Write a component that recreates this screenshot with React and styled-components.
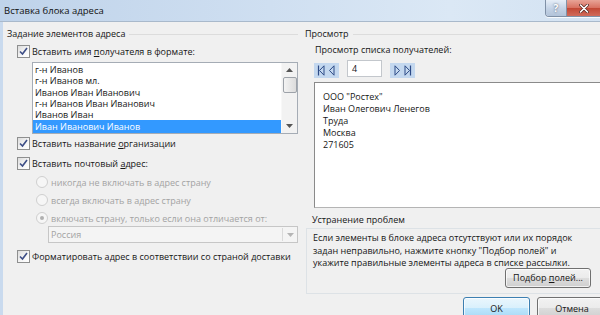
import * as React from "react";
import styled, { createGlobalStyle } from "styled-components";

const GlobalStyle = createGlobalStyle`
  html, body { margin: 0; padding: 0; background: #f0f0f0; overflow: hidden; }
  body { font-family: "Open Sans", "Noto Sans", sans-serif; font-size: 9px; color: #161616; }
`;

const Window = styled.div`
  width: 600px;
  height: 315px;
  overflow: hidden;
  display: flex;
  flex-direction: column;
  background: #f0f0f0;
`;

const TitleBar = styled.div`
  height: 21px;
  flex: none;
  display: flex;
  align-items: flex-start;
  background: linear-gradient(90deg, #bfd3ea 0%, #cfdff1 45%, #dbe8f5 75%, #d3e2f2 100%);
  border-bottom: 1px solid #a9b9cb;
`;

const Title = styled.div`
  flex: 1;
  padding: 4px 0 0 4px;
  font-size: 9.5px;
  color: #111;
`;

const CaptionGroup = styled.div`
  flex: none;
  display: flex;
  height: 16px;
  border: 1px solid #7f90a6;
  border-top: none;
  border-right: none;
  border-radius: 0 0 0 4px;
  overflow: hidden;
  box-shadow: 0 1px 0 rgba(255, 255, 255, 0.8);
`;

const HelpButton = styled.div`
  width: 20px;
  background-color: #c6d4e6;
  background-image: linear-gradient(#e6eef7, #c3d2e5 55%, #b2c3d9);
  display: flex;
  align-items: center;
  justify-content: center;
  font-weight: bold;
  font-size: 10px;
  color: #fff;
  text-shadow: 0 0 2px #3f4a5e;
  border-right: 1px solid #8193a8;
`;

const CloseButton = styled.div`
  width: 33px;
  background-color: #cf5d4e;
  background-image: linear-gradient(#e8a497, #d87262 48%, #c24835 52%, #d06b5b);
  display: flex;
  align-items: center;
  justify-content: center;
`;

const Body = styled.div`
  flex: 1;
  display: flex;
  border-left: 3px solid #c9daee;
`;

const LeftPane = styled.div`
  width: 291px;
  flex: none;
  padding: 4px 4px 0 4px;
  display: flex;
  flex-direction: column;
`;

const RightPane = styled.div`
  flex: 1;
  padding: 4px 0 0 3px;
  display: flex;
  flex-direction: column;
  min-width: 0;
`;

const GroupHeader = styled.div`
  height: 14px;
  display: flex;
  align-items: center;
  gap: 4px;
  white-space: nowrap;
  &::after {
    content: "";
    flex: 1;
    height: 1px;
    background: #dcdcdc;
    margin-top: 2px;
  }
`;

const Row = styled.div`
  height: 14px;
  display: flex;
  align-items: center;
  gap: ${(p) => p.$gap ?? 2}px;
  margin-top: ${(p) => p.$mt ?? 0}px;
  margin-left: ${(p) => p.$ml ?? 0}px;
  color: ${(p) => (p.$disabled ? "#a3a3a3" : "inherit")};
  white-space: nowrap;
`;

const Box = styled.span`
  width: 11px;
  height: 11px;
  flex: none;
  border: 1px solid #8e8f8f;
  background: linear-gradient(135deg, #dcdcdc 0%, #f7f7f7 60%, #fff 100%);
  display: flex;
  align-items: center;
  justify-content: center;
`;

const Radio = styled.span`
  width: 10px;
  height: 10px;
  flex: none;
  border-radius: 50%;
  border: 1px solid #cfcfcf;
  background: #f6f6f6;
  display: flex;
  align-items: center;
  justify-content: center;
  &::after {
    content: "";
    width: 4px;
    height: 4px;
    border-radius: 50%;
    background: ${(p) => (p.$on ? "#b0b0b0" : "transparent")};
  }
`;

const ListBox = styled.div`
  margin: 4px 0 0 25px;
  height: 70px;
  border: 1px solid #a5acb5;
  background: #fff;
  display: flex;
`;

const ListItems = styled.div`
  flex: 1;
  padding-top: 1px;
  overflow: hidden;
`;

const ListItem = styled.div`
  height: 11.3px;
  line-height: 11px;
  padding-left: 2px;
  white-space: nowrap;
  background: ${(p) => (p.$sel ? "#3399ff" : "transparent")};
  color: ${(p) => (p.$sel ? "#fff" : "inherit")};
  ${(p) => p.$sel && "height: 13px; line-height: 13px;"}
`;

const ScrollBar = styled.div`
  width: 15px;
  flex: none;
  background: #f2f2f2;
  border-left: 1px solid #f8f8f8;
  display: flex;
  flex-direction: column;
  align-items: center;
`;

const ScrollArrow = styled.div`
  height: 14px;
  display: flex;
  align-items: center;
  justify-content: center;
`;

const Thumb = styled.div`
  width: 12px;
  height: 14px;
  border: 1px solid #9da2a9;
  border-radius: 2px;
  background: linear-gradient(90deg, #f3f3f3, #dcdcdc);
`;

const Spacer = styled.div`
  flex: 1;
`;

const Combo = styled.div`
  margin: 1px 0 0 41px;
  height: 15px;
  border: 1px solid #c6c6c6;
  background: #f4f4f4;
  color: #a3a3a3;
  display: flex;
  align-items: center;
  padding-left: 2px;
  justify-content: space-between;
`;

const ComboArrow = styled.div`
  width: 14px;
  height: 13px;
  border-left: 1px solid #dadada;
  display: flex;
  align-items: center;
  justify-content: center;
`;

const Label = styled.div`
  margin: ${(p) => p.$mt ?? 0}px 0 0 ${(p) => p.$ml ?? 0}px;
  height: 14px;
  line-height: 14px;
  white-space: nowrap;
`;

const NavRow = styled.div`
  margin: 3px 0 0 9px;
  height: 18px;
  display: flex;
  align-items: flex-start;
  gap: 8px;
`;

const NavButton = styled.div`
  margin-top: 3px;
  width: 25px;
  height: 15px;
  background: #c4d8ef;
  display: flex;
  align-items: center;
  justify-content: center;
`;

const NumInput = styled.div`
  width: 35px;
  height: 17px;
  border: 1px solid #c3c7cc;
  background: #fff;
  padding-left: 4px;
  line-height: 15px;
  box-sizing: border-box;
`;

const Preview = styled.div`
  margin: 4px 0 0 9px;
  width: 320px;
  height: 126px;
  border: 1px solid #8a8a8a;
  border-right: none;
  border-bottom-color: #b4b4b4;
  background: #fff;
  padding: 8px 0 0 8px;
  box-sizing: border-box;
`;

const PreviewLine = styled.div`
  height: 12px;
  line-height: 12px;
`;

const Trouble = styled.div`
  margin: 1px 0 0 1px;
  width: 320px;
  height: 66px;
  border: 1px solid #dde2e6;
  border-right: none;
  box-sizing: border-box;
  padding: 3px 0 0 6px;
  display: flex;
  flex-direction: column;
`;

const TroubleText = styled.div`
  line-height: 12.5px;
  white-space: nowrap;
`;

const Button = styled.div`
  height: ${(p) => p.$h ?? 20}px;
  width: ${(p) => p.$w}px;
  flex: none;
  box-sizing: border-box;
  border: 1px solid ${(p) => (p.$def ? "#3c7fb1" : "#707070")};
  border-radius: 3px;
  background: ${(p) =>
    p.$def
      ? "linear-gradient(180deg, #eaf6fd 0%, #d9f0fc 50%, #bee6fd 51%, #a7d9f5 100%)"
      : "linear-gradient(180deg, #f2f2f2 0%, #ebebeb 50%, #dddddd 51%, #cfcfcf 100%)"};
  box-shadow: inset 0 0 0 1px rgba(255, 255, 255, 0.7);
  display: flex;
  align-items: center;
  justify-content: center;
  white-space: nowrap;
`;

const TroubleButtonRow = styled.div`
  display: flex;
  padding-left: 192px;
  margin-top: -2px;
`;

const FooterRow = styled.div`
  display: flex;
  gap: 7px;
  margin: 3px 0 0 158px;
`;

const U = styled.span`
  text-decoration: underline;
  text-underline-offset: 1px;
`;

const Check = () => (
  <Box>
    <svg width="9" height="9" viewBox="0 0 9 9">
      <path d="M1 4.5 L3.5 7 L8 1" fill="none" stroke="#3d4e86" strokeWidth="1.6" />
    </svg>
  </Box>
);

const Arrow = ({ up, color = "#555" }) => (
  <svg width="7" height="4" viewBox="0 0 7 4">
    <path d={up ? "M0 4 L3.5 0 L7 4 Z" : "M0 0 L3.5 4 L7 0 Z"} fill={color} />
  </svg>
);

const CloseIcon = () => (
  <svg width="10" height="9" viewBox="0 0 10 9">
    <path d="M1.5 1 L8.5 8 M8.5 1 L1.5 8" stroke="#5a2a24" strokeWidth="3" strokeLinecap="round" />
    <path d="M1.5 1 L8.5 8 M8.5 1 L1.5 8" stroke="#fff" strokeWidth="1.6" strokeLinecap="round" />
  </svg>
);

const FirstIcon = () => (
  <svg width="19" height="11" viewBox="0 0 19 11">
    <path d="M1.5 0.5 V10.5" stroke="#2c4a86" strokeWidth="1.2" />
    <path d="M7 0.8 L2.5 5.5 L7 10.2 Z" fill="none" stroke="#2c4a86" strokeWidth="1" />
    <path d="M17 0.8 L12.5 5.5 L17 10.2 Z" fill="none" stroke="#2c4a86" strokeWidth="1" />
  </svg>
);

const LastIcon = () => (
  <svg width="19" height="11" viewBox="0 0 19 11">
    <path d="M2 0.8 L6.5 5.5 L2 10.2 Z" fill="none" stroke="#2c4a86" strokeWidth="1" />
    <path d="M12 0.8 L16.5 5.5 L12 10.2 Z" fill="none" stroke="#2c4a86" strokeWidth="1" />
    <path d="M17.5 0.5 V10.5" stroke="#2c4a86" strokeWidth="1.2" />
  </svg>
);

const names = [
  "г-н Иванов",
  "г-н Иванов мл.",
  "Иванов Иван Иванович",
  "г-н Иванов Иван Иванович",
  "Иванов Иван",
];

export default function App() {
  return (
    <>
      <GlobalStyle />
      <Window>
        <TitleBar>
          <Title>Вставка блока адреса</Title>
          <CaptionGroup>
            <HelpButton>?</HelpButton>
            <CloseButton>
              <CloseIcon />
            </CloseButton>
          </CaptionGroup>
        </TitleBar>
        <Body>
          <LeftPane>
            <GroupHeader>Задание элементов адреса</GroupHeader>
            <Row $mt={4} $ml={10}>
              <Check />
              <span>
                Вставить имя <U>п</U>олучателя в формате:
              </span>
            </Row>
            <ListBox>
              <ListItems>
                {names.map((n) => (
                  <ListItem key={n}>{n}</ListItem>
                ))}
                <ListItem $sel>Иван Иванович Иванов</ListItem>
              </ListItems>
              <ScrollBar>
                <ScrollArrow>
                  <Arrow up />
                </ScrollArrow>
                <Thumb />
                <Spacer />
                <ScrollArrow>
                  <Arrow />
                </ScrollArrow>
              </ScrollBar>
            </ListBox>
            <Row $mt={2} $ml={10}>
              <Check />
              <span>
                Вставить название <U>о</U>рганизации
              </span>
            </Row>
            <Row $mt={6} $ml={10}>
              <Check />
              <span>
                Вставить почтовый <U>а</U>дрес:
              </span>
            </Row>
            <Row $mt={5} $ml={29} $gap={3} $disabled>
              <Radio />
              <span>никогда не включать в адрес страну</span>
            </Row>
            <Row $mt={4} $ml={29} $gap={3} $disabled>
              <Radio />
              <span>всегда включать в адрес страну</span>
            </Row>
            <Row $mt={4} $ml={29} $gap={3} $disabled>
              <Radio $on />
              <span>включать страну, только если она отличается от:</span>
            </Row>
            <Combo>
              <span>Россия</span>
              <ComboArrow>
                <Arrow color="#b5b5b5" />
              </ComboArrow>
            </Combo>
            <Row $mt={6} $ml={10}>
              <Check />
              <span>Форматировать адрес в соответствии со страной доставки</span>
            </Row>
          </LeftPane>
          <RightPane>
            <GroupHeader>Просмотр</GroupHeader>
            <Label $mt={3} $ml={10}>Просмотр списка получателей:</Label>
            <NavRow>
              <NavButton>
                <FirstIcon />
              </NavButton>
              <NumInput>4</NumInput>
              <NavButton>
                <LastIcon />
              </NavButton>
            </NavRow>
            <Preview>
              <PreviewLine>ООО "Ростех"</PreviewLine>
              <PreviewLine>Иван Олегович Ленегов</PreviewLine>
              <PreviewLine>Труда</PreviewLine>
              <PreviewLine>Москва</PreviewLine>
              <PreviewLine>271605</PreviewLine>
            </Preview>
            <Label $mt={5} $ml={7}>Устранение проблем</Label>
            <Trouble>
              <TroubleText>
                Если элементы в блоке адреса отсутствуют или их порядок
                <br />
                задан неправильно, нажмите кнопку "Подбор полей" и
                <br />
                укажите правильные элементы адреса в списке рассылки.
              </TroubleText>
              <TroubleButtonRow>
                <Button $w={86}>
                  <span>
                    Подбор <U>п</U>олей...
                  </span>
                </Button>
              </TroubleButtonRow>
            </Trouble>
            <FooterRow>
              <Button $w={67} $h={22} $def>OK</Button>
              <Button $w={70} $h={22}>Отмена</Button>
            </FooterRow>
          </RightPane>
        </Body>
      </Window>
    </>
  );
}
